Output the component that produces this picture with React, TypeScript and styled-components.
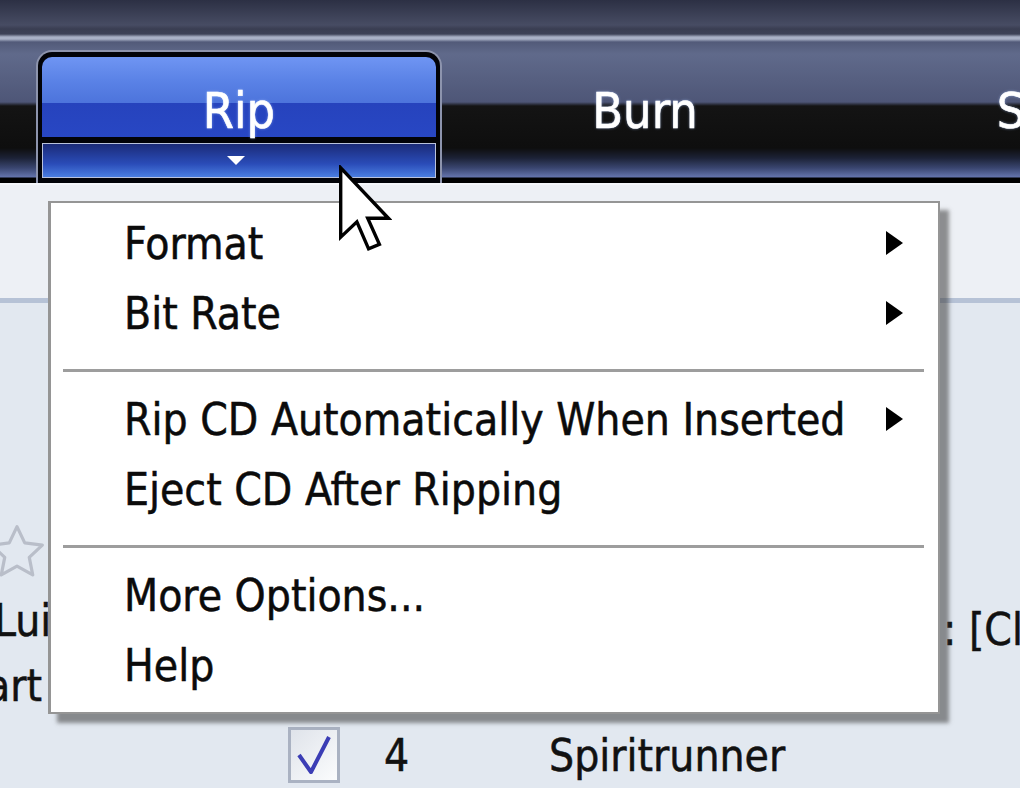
import React, { FunctionComponent } from 'react';
import styled, { createGlobalStyle } from 'styled-components';

const GlobalStyle = createGlobalStyle`
  html, body {
    margin: 0;
    padding: 0;
    background: #e4e9f0;
  }
  body {
    width: 1020px;
    height: 788px;
    overflow: hidden;
  }
`;

const menuFont = `"DejaVu Sans Condensed", "DejaVu Sans", sans-serif`;

const Window = styled.div`
  position: relative;
  width: 1020px;
  height: 788px;
  display: flex;
  flex-direction: column;
  overflow: hidden;
  font-family: ${menuFont};
  font-stretch: condensed;
`;

const TopBar = styled.div`
  height: 183px;
  box-sizing: border-box;
  padding: 50px 0 0 36px;
  display: flex;
  align-items: stretch;
  background: linear-gradient(
    to bottom,
    #2c3044 0px,
    #474c63 25px,
    #3a3e52 29px,
    #3d4257 34px,
    #a9b1c6 37px,
    #a9b1c6 39px,
    #525a79 42px,
    #606a8b 54px,
    #4e5677 102px,
    #141414 106px,
    #0e0e0e 148px,
    #1c2236 158px,
    #3a4670 168px,
    #6474ac 177px,
    #000 178px,
    #000 183px
  );
`;

const Tab = styled.div<{ $active?: boolean }>`
  width: 406px;
  flex: none;
  box-sizing: border-box;
  display: flex;
  flex-direction: column;
  ${({ $active }) =>
    $active &&
    `
    border: 2px solid #8d94ad;
    border-bottom: none;
    border-radius: 16px 16px 0 0;
    background: #020308;
    padding: 5px 4px 3px;
    gap: 6px;
  `}
`;

const TabFace = styled.div<{ $active?: boolean }>`
  height: ${({ $active }) => ($active ? '80px' : '88px')};
  margin-top: ${({ $active }) => ($active ? '0' : '6px')};
  display: flex;
  align-items: center;
  justify-content: center;
  padding-top: ${({ $active }) => ($active ? '28px' : '22px')};
  box-sizing: border-box;
  color: #fff;
  font-size: 50px;
  text-shadow: 0 0 3px rgba(170, 200, 255, 0.7);
  -webkit-text-stroke: 0.6px #fff;
  border-radius: 10px 10px 0 0;
  background: ${({ $active }) =>
    $active
      ? 'linear-gradient(to bottom, #6f95f3 0%, #5a82e6 30%, #4d74dc 57%, #2643bd 58%, #2847c4 100%)'
      : 'transparent'};
`;

const ArrowStrip = styled.div`
  height: 35px;
  box-sizing: border-box;
  border: 1px solid #b9c2dc;
  display: flex;
  align-items: center;
  justify-content: center;
  background: linear-gradient(to bottom, #1b2b78 0%, #2a4cb8 60%, #4a7ee0 100%);
`;

const DownTriangle = styled.div`
  width: 0;
  height: 0;
  border-left: 9px solid transparent;
  border-right: 9px solid transparent;
  border-top: 9px solid #fff;
  margin-left: -6px;
`;

const Content = styled.div`
  flex: 1;
  display: flex;
  flex-direction: column;
  border-top: 2px solid #f4f6fa;
`;

const HeaderStrip = styled.div`
  height: 113px;
  background: #edf0f5;
  border-bottom: 5px solid #b6c2d6;
`;

const ListArea = styled.div`
  flex: 1;
  display: grid;
  grid-template-columns: 48px 892px 80px;
  background: #e2e8f0;
  font-size: 44px;
  color: #111;
  -webkit-text-stroke: 0.5px #111;
`;

const SideColumn = styled.div`
  display: flex;
  flex-direction: column;
  overflow: hidden;
  white-space: nowrap;
`;

const Star = styled.svg`
  margin: 217px 0 0 -15px;
  width: 64px;
  height: 64px;
  flex: none;
`;

const SideText = styled.div<{ $shift: number; $top: number }>`
  margin-left: ${({ $shift }) => $shift}px;
  margin-top: ${({ $top }) => $top}px;
  line-height: 50px;
`;

const MiddleColumn = styled.div`
  display: flex;
  flex-direction: column;
  justify-content: flex-end;
`;

const TrackRow = styled.div`
  display: flex;
  align-items: center;
  height: 62px;
  margin-bottom: 2px;
  padding-left: 240px;
`;

const CheckBox = styled.div`
  width: 52px;
  height: 56px;
  box-sizing: border-box;
  border: 3px solid #aab2c2;
  background: linear-gradient(135deg, #dfe3ea, #fbfcfd);
  display: flex;
  align-items: center;
  justify-content: center;
  -webkit-text-stroke: 0;
`;

const TrackNumber = styled.span`
  margin-left: 44px;
  width: 165px;
`;

const Menu = styled.div`
  position: absolute;
  left: 48px;
  top: 201px;
  width: 892px;
  height: 513px;
  box-sizing: border-box;
  background: #fff;
  border: 2px solid #959595;
  border-left-width: 3px;
  box-shadow: 9px 9px 4px rgba(60, 60, 60, 0.55);
  padding: 9px 0 0;
  display: flex;
  flex-direction: column;
  font-size: 44px;
  color: #0b0b0b;
  -webkit-text-stroke: 0.5px #0b0b0b;
`;

const MenuItem = styled.div`
  height: 70px;
  display: flex;
  align-items: center;
  padding: 0 35px 0 73px;
  line-height: 1;
`;

const MenuLabel = styled.span`
  flex: 1;
  padding-bottom: 6px;
`;

const SubArrow = styled.div`
  width: 0;
  height: 0;
  border-top: 12px solid transparent;
  border-bottom: 12px solid transparent;
  border-left: 17px solid #000;
  margin-bottom: 8px;
`;

const Separator = styled.div`
  height: 36px;
  display: flex;
  align-items: center;
  padding: 0 14px 0 12px;
  &::after {
    content: '';
    flex: 1;
    height: 3px;
    background: #9d9d9d;
  }
`;

const Cursor = styled.svg`
  position: absolute;
  left: 338px;
  top: 165px;
  width: 54px;
  height: 88px;
`;

interface MenuEntry {
  label?: string;
  sub?: boolean;
  separator?: boolean;
}

const entries: MenuEntry[] = [
  { label: 'Format', sub: true },
  { label: 'Bit Rate', sub: true },
  { separator: true },
  { label: 'Rip CD Automatically When Inserted', sub: true },
  { label: 'Eject CD After Ripping' },
  { separator: true },
  { label: 'More Options...' },
  { label: 'Help' },
];

const App: FunctionComponent = () => {
  return (
    <Window>
      <GlobalStyle />
      <TopBar>
        <Tab $active>
          <TabFace $active>Rip</TabFace>
          <ArrowStrip>
            <DownTriangle />
          </ArrowStrip>
        </Tab>
        <Tab>
          <TabFace>Burn</TabFace>
        </Tab>
        <Tab>
          <TabFace>Sync</TabFace>
        </Tab>
      </TopBar>
      <Content>
        <HeaderStrip />
        <ListArea>
          <SideColumn>
            <Star viewBox="0 0 24 24">
              <path
                d="M12 2.5l2.9 6.1 6.6.8-4.9 4.6 1.3 6.6L12 17.3l-5.9 3.3 1.3-6.6-4.9-4.6 6.6-.8z"
                fill="none"
                stroke="#b9bec9"
                strokeWidth="1.2"
                strokeLinejoin="round"
              />
            </Star>
            <SideText $shift={-6} $top={12}>Lui</SideText>
            <SideText $shift={-14} $top={15}>art</SideText>
          </SideColumn>
          <MiddleColumn>
            <TrackRow>
              <CheckBox>
                <svg width="36" height="42" viewBox="0 0 36 42">
                  <path d="M3 21 L15 38 L33 3" fill="none" stroke="#3b3db5" strokeWidth="4" strokeLinejoin="round" />
                </svg>
              </CheckBox>
              <TrackNumber>4</TrackNumber>
              <span>Spiritrunner</span>
            </TrackRow>
          </MiddleColumn>
          <SideColumn>
            <SideText $shift={3} $top={302}>: [Cl</SideText>
          </SideColumn>
        </ListArea>
      </Content>
      <Menu>
        {entries.map((entry, index) =>
          entry.separator ? (
            <Separator key={index} />
          ) : (
            <MenuItem key={index}>
              <MenuLabel>{entry.label}</MenuLabel>
              {entry.sub && <SubArrow />}
            </MenuItem>
          )
        )}
      </Menu>
      <Cursor viewBox="0 0 12 19.5">
        <path
          d="M0.6 0.6 L0.6 16 L4.2 12.6 L6.8 18.6 L9.2 17.6 L6.6 11.8 L11.2 11.8 Z"
          fill="#fff"
          stroke="#000"
          strokeWidth="0.75"
          strokeLinejoin="miter"
        />
      </Cursor>
    </Window>
  );
};

export default App;
